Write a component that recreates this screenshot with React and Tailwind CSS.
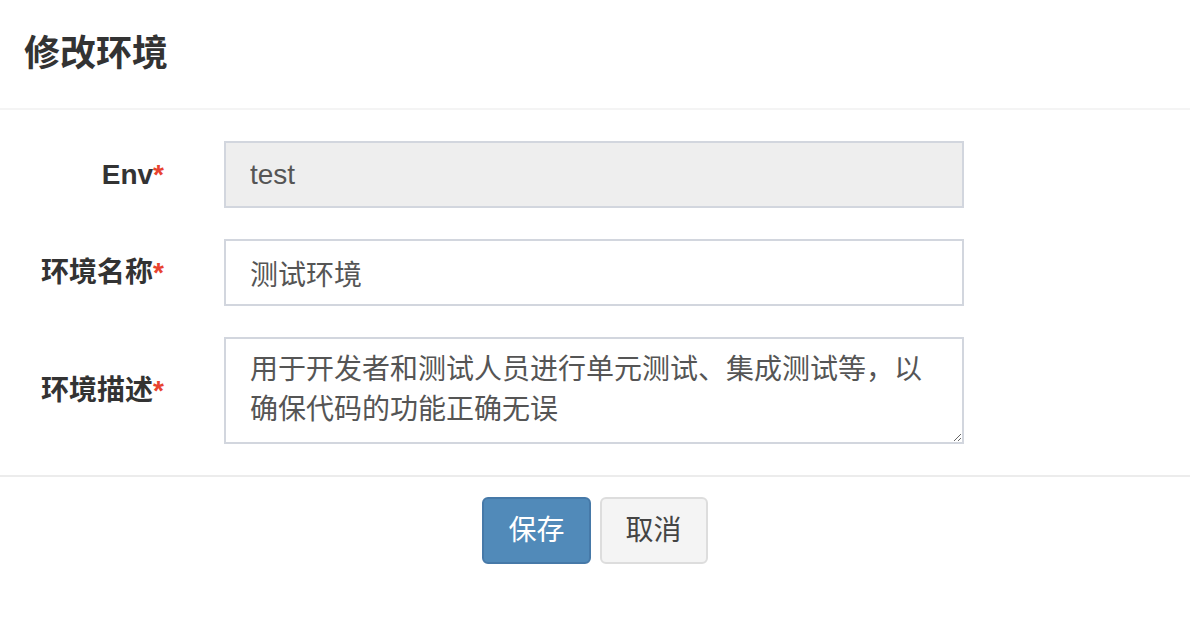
import React from "react";

const fieldClass =
  "w-[740px] h-[67px] border-2 border-[#d2d6de] px-6 text-[28px] text-[#555] outline-none";

const Label = ({ children }) => (
  <label className="w-[164px] shrink-0 text-right text-[28px] font-bold text-[#333]">
    {children}
    <span className="text-[#e8432f]">*</span>
  </label>
);

export default function App() {
  return (
    <div className="w-full h-[618px] bg-white font-['Liberation_Sans','Noto_Sans_CJK_SC',sans-serif]">
      {/* Header */}
      <div className="h-[110px] flex items-center px-6 border-b-2 border-[#f4f4f4]">
        <h4 className="text-[36px] font-bold text-[#333] leading-none">修改环境</h4>
      </div>

      {/* Form body */}
      <div className="pt-[31px] pb-[31px] flex flex-col gap-[31px]">
        <div className="flex items-center">
          <Label>Env</Label>
          <input
            readOnly
            defaultValue="test"
            className={`${fieldClass} ml-[60px] bg-[#eeeeee]`}
          />
        </div>
        <div className="flex items-center">
          <Label>环境名称</Label>
          <input defaultValue="测试环境" className={`${fieldClass} ml-[60px] bg-white`} />
        </div>
        <div className="flex items-center">
          <Label>环境描述</Label>
          <textarea
            defaultValue="用于开发者和测试人员进行单元测试、集成测试等，以确保代码的功能正确无误"
            className="ml-[60px] w-[740px] h-[107px] border-2 border-[#d2d6de] px-6 py-[11px] text-[28px] leading-[40px] text-[#555] outline-none bg-white"
          />
        </div>
      </div>

      {/* Footer */}
      <div className="border-t-2 border-[#ececec] pt-[20px] flex justify-center gap-[9px]">
        <button className="h-[67px] px-6 rounded-md border-2 border-[#4679a8] bg-[#518ab9] text-white text-[28px]">
          保存
        </button>
        <button className="h-[67px] px-6 rounded-md border-2 border-[#dddddd] bg-[#f4f4f4] text-[#444] text-[28px]">
          取消
        </button>
      </div>
    </div>
  );
}
